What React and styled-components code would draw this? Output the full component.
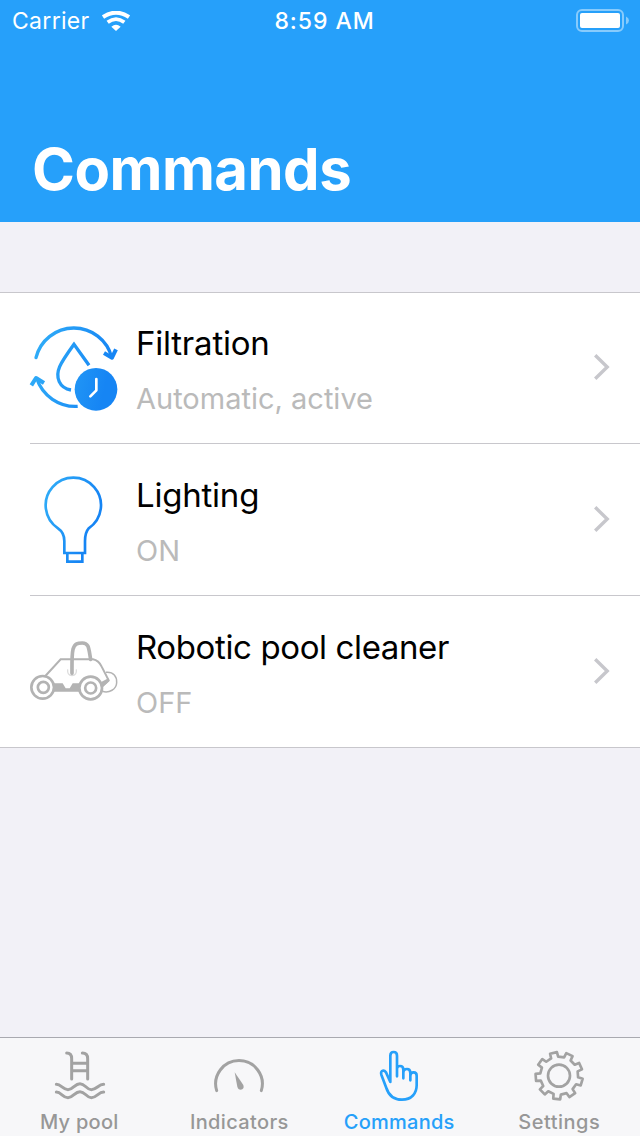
import React from "react";
import styled, { createGlobalStyle } from "styled-components";

const GlobalStyle = createGlobalStyle`
  * { box-sizing: border-box; }
  body { margin: 0; font-family: Inter, "Liberation Sans", sans-serif; }
`;

const Screen = styled.div`
  width: 640px;
  height: 1136px;
  display: flex;
  flex-direction: column;
  background: #f2f1f7;
  overflow: hidden;
`;

const Header = styled.header`
  height: 222px;
  background: #26a0fa;
  color: #fff;
  display: flex;
  flex-direction: column;
  justify-content: space-between;
`;

const StatusBar = styled.div`
  height: 42px;
  display: grid;
  grid-template-columns: 1fr auto 1fr;
  align-items: center;
  padding: 0 11px 0 12px;
  font-size: 23px;
  line-height: 42px;
`;

const Carrier = styled.div`
  display: flex;
  align-items: center;
  gap: 12px;
  letter-spacing: 0.3px;
`;

const Clock = styled.div`
  font-weight: 500;
  letter-spacing: 0.95px;
  padding-left: 8px;
`;

const Battery = styled.svg`
  justify-self: end;
`;

const Title = styled.h1`
  margin: 0;
  padding: 0 0 17px 32px;
  font-size: 58px;
  line-height: 72px;
  font-weight: 700;
  letter-spacing: -0.5px;
`;

const List = styled.ul`
  list-style: none;
  margin: 70px 0 0;
  padding: 0;
  background: #fff;
  border-top: 1px solid #c8c7cc;
  border-bottom: 1px solid #c8c7cc;
`;

const Row = styled.li`
  display: flex;
  height: ${(p) => (p.$first ? 150 : 151)}px;
  padding-right: 28px;
  align-items: center;
`;

const Separator = styled.li`
  height: 1px;
  margin-left: 30px;
  background: #c8c7cc;
`;

const RowIcon = styled.svg`
  width: 110px;
  height: 106px;
  margin-left: 20px;
  flex: none;
`;

const RowText = styled.div`
  flex: 1;
  padding: 5px 0 0 6px;
`;

const RowTitle = styled.div`
  font-size: 33px;
  line-height: 44px;
  letter-spacing: ${(p) => p.$tracking}px;
  color: #000;
`;

const RowDetail = styled.div`
  margin-top: 13px;
  font-size: 29px;
  line-height: 42px;
  color: #bababa;
`;

const RowArrow = styled.svg`
  width: 20px;
  height: 30px;
  margin-bottom: 2px;
  flex: none;
`;

const TabBar = styled.nav`
  height: 99px;
  margin-top: auto;
  display: grid;
  grid-template-columns: repeat(4, 160px);
  background: #f7f7f9;
  border-top: 1px solid #a9a9b0;
`;

const Tab = styled.div`
  display: flex;
  flex-direction: column;
  align-items: center;
  color: ${(p) => (p.$active ? "#26a0fa" : "#979797")};
`;

const TabIcon = styled.svg`
  width: 140px;
  height: 70px;
  flex: none;
`;

const TabLabel = styled.span`
  font-size: 20px;
  line-height: 28px;
  font-weight: 500;
  padding-right: 1.5px;
  letter-spacing: ${(p) => p.$tracking}px;
`;

const Chevron = () => (
  <RowArrow viewBox="0 0 20 30" fill="none" stroke="#c7c7cc" strokeWidth="3.4">
    <path d="M3.2 3.3 L15.2 15 L3.2 26.7" />
  </RowArrow>
);

const WifiIcon = () => (
  <svg width="28" height="20" viewBox="0 0 84 60" fill="none" stroke="#fff">
    <path d="M3 18 Q42 -8 81 18" strokeWidth="12" />
    <path d="M17 34 Q42 15 67 34" strokeWidth="11" />
    <path d="M28 47 Q42 35 56 47 L42 60 Z" fill="#fff" stroke="none" />
  </svg>
);

const BlueGradient = ({ id, x1, x2 }) => (
  <linearGradient id={id} gradientUnits="userSpaceOnUse" x1={x1} y1="0" x2={x2} y2="60">
    <stop offset="0" stopColor="#33b2f8" />
    <stop offset="1" stopColor="#1685f4" />
  </linearGradient>
);

const FiltrationIcon = () => (
  <RowIcon viewBox="0 -3 330 318" fill="none" stroke="url(#filter)" strokeWidth="10" strokeLinecap="round" strokeLinejoin="round">
    <defs><BlueGradient id="filter" x1="30" x2="290" /></defs>
    <path d="M48 125 A117 117 0 0 1 275 124" />
    <path d="M252 111 L276 125 L288 100" strokeWidth="12" strokeLinecap="butt" />
    <path d="M173 271 A122 122 0 0 1 50 187" strokeLinecap="butt" />
    <path d="M34 208 L48 186 L72 201" strokeWidth="12" strokeLinecap="butt" />
    <path d="M153 222 C118 216 105 184 119 152 C127 134 144 110 162 85 L207 148" strokeLinecap="butt" strokeLinejoin="miter" />
    <circle cx="228" cy="220" r="64" fill="url(#filter)" stroke="none" />
    <path d="M229 189 V223 L211 241" stroke="#fff" strokeWidth="8" />
  </RowIcon>
);

const LightingIcon = () => (
  <RowIcon viewBox="0 0 330 318" fill="none" stroke="url(#bulb)" strokeWidth="8">
    <defs><BlueGradient id="bulb" x1="70" x2="250" /></defs>
    <path d="M133 258 V222 C133 202 126 192 114 184 A83 83 0 1 1 206 184 C198 193 195 202 195 222 V258 Z" />
    <path d="M142 259 V284 H187 V259" />
  </RowIcon>
);

const CleanerIcon = () => (
  <RowIcon viewBox="0 -33 330 318" fill="none" stroke="#b3b3b3" strokeWidth="6">
    <path d="M76 138 L122 88 H219 Q236 91 245 110 L266 151 L247 169" />
    <path d="M258 127 C281 125 291 140 290 158 C289 178 268 190 247 184" strokeWidth="4.5" />
    <path d="M143 118 Q141 136 156 137 Q171 136 169 118" stroke="#dedede" strokeWidth="4" />
    <path d="M156 130 C156 105 155 75 159 58 C164 39 174 39 187 39 C208 39 206 57 212 88" strokeWidth="11" strokeLinecap="round" />
    <path d="M98 160 H128 L137 175 H149 L158 160 H186 V185 H98 Z" fill="#b3b3b3" stroke="none" />
    <path d="M245 155 L265 145 L268 154 L247 172 Z" fill="#b3b3b3" stroke="none" />
    <circle cx="68" cy="172" r="34" fill="#fff" strokeWidth="8" />
    <circle cx="70" cy="172" r="16.5" strokeWidth="8" />
    <circle cx="212" cy="174" r="34" fill="#fff" strokeWidth="8" />
    <circle cx="212" cy="174" r="16.5" strokeWidth="8" />
  </RowIcon>
);

const tabStroke = { fill: "none", stroke: "currentColor", strokeLinecap: "round", strokeLinejoin: "round" };

const PoolIcon = () => (
  <TabIcon viewBox="-30 6 420 210" {...tabStroke} stroke="#a2a2a2" strokeWidth="9">
    <path d="M140 51 Q155 51 155 68 V129 M187 51 Q203 51 203 68 V129 M155 82 H203 M155 104 H203" />
    <path d="M109 145 C124 145 128 161 144 161 C160 161 164 143 180 143 C196 143 199 161 214 161 C230 161 235 145 251 145" />
    <path d="M109 168 C124 168 128 185 144 185 C160 185 164 167 180 167 C196 167 199 185 214 185 C230 185 235 168 251 168" />
  </TabIcon>
);

const GaugeIcon = () => (
  <TabIcon viewBox="0 6 420 210" {...tabStroke} stroke="#a2a2a2" strokeWidth="9">
    <path d="M140 164 A70 70 0 1 1 274 164" />
    <path d="M194 109 L220 147 Q224 160 212 161 Q204 161 202 152 Z" fill="#a2a2a2" stroke="none" />
  </TabIcon>
);

const HandIcon = () => (
  <TabIcon viewBox="0 6 420 210" {...tabStroke} strokeWidth="8">
    <path d="M201 121 V59 Q201 48 191 48 Q181 48 181 59 V138 L168 109 Q162 101 156 105 Q152 108 154 116 L169 156 C177 181 192 191 216 191 C245 191 260 172 260 148 V119 Q260 109 251 109 Q241 109 241 119 V133 V111 Q241 99 231 99 Q220 99 220 111 V127 V101 Q220 90 210 90 Q203 90 201 97" />
  </TabIcon>
);

const TEETH = 9;
const polar = (r, deg) => {
  const a = (deg * Math.PI) / 180;
  return `${(177.5 + r * Math.cos(a)).toFixed(1)} ${(119 + r * Math.sin(a)).toFixed(1)}`;
};
const gearPath =
  "M" +
  Array.from({ length: TEETH }, (_, i) => {
    const c = -104 + (i * 360) / TEETH;
    return [polar(57, c - 11), polar(71, c - 8.5), polar(71, c + 8.5), polar(57, c + 11)].join(" L");
  }).join(" L") +
  " Z";

const GearIcon = () => (
  <TabIcon viewBox="-30 6 420 210" {...tabStroke} stroke="#a2a2a2" strokeWidth="8">
    <path d={gearPath} />
    <circle cx="177" cy="119" r="33" />
  </TabIcon>
);

const rows = [
  { title: "Filtration", detail: "Automatic, active", Icon: FiltrationIcon, tracking: -0.22 },
  { title: "Lighting", detail: "ON", Icon: LightingIcon, tracking: -0.22 },
  { title: "Robotic pool cleaner", detail: "OFF", Icon: CleanerIcon, tracking: -0.38 },
];

const tabs = [
  { label: "My pool", Icon: PoolIcon, tracking: 0.25 },
  { label: "Indicators", Icon: GaugeIcon, tracking: 0.35 },
  { label: "Commands", Icon: HandIcon, tracking: 0.25, active: true },
  { label: "Settings", Icon: GearIcon, tracking: 0.5 },
];

export default function App() {
  return (
    <Screen>
      <GlobalStyle />
      <Header>
        <StatusBar>
          <Carrier>Carrier <WifiIcon /></Carrier>
          <Clock>8:59 AM</Clock>
          <Battery width="54" height="24" viewBox="0 0 54 24">
            <rect x="2" y="1" width="46" height="21" rx="5" fill="none" stroke="#fff" strokeOpacity=".45" strokeWidth="2" />
            <rect x="5" y="4" width="40" height="15" rx="2" fill="#fff" />
            <path d="M51 7.5 Q54 9 54 11.5 Q54 14 51 15.5 Z" fill="#fff" fillOpacity=".45" />
          </Battery>
        </StatusBar>
        <Title>Commands</Title>
      </Header>
      <List>
        {rows.map(({ title, detail, Icon, tracking }, i) => (
          <React.Fragment key={title}>
            {i > 0 && <Separator />}
            <Row $first={i === 0}>
              <Icon />
              <RowText>
                <RowTitle $tracking={tracking}>{title}</RowTitle>
                <RowDetail>{detail}</RowDetail>
              </RowText>
              <Chevron />
            </Row>
          </React.Fragment>
        ))}
      </List>
      <TabBar>
        {tabs.map(({ label, Icon, tracking, active }) => (
          <Tab key={label} $active={active}>
            <Icon />
            <TabLabel $tracking={tracking}>{label}</TabLabel>
          </Tab>
        ))}
      </TabBar>
    </Screen>
  );
}
